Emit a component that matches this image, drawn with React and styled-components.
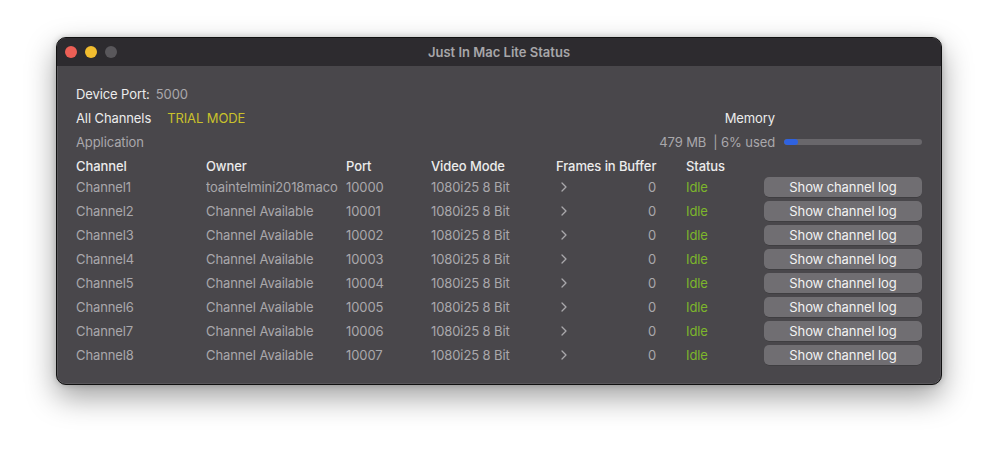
import React from 'react';
import styled, { createGlobalStyle } from 'styled-components';

const GlobalStyle = createGlobalStyle`
  body {
    margin: 0;
    background: #ffffff;
    font-family: Inter, "Noto Sans", "Liberation Sans", sans-serif;
    -webkit-font-smoothing: antialiased;
  }
`;

const Page = styled.div`
  width: 998px;
  height: 460px;
  padding: 37px 0 0 56px;
  box-sizing: border-box;
`;

const Window = styled.div`
  width: 886px;
  height: 348px;
  border-radius: 10px;
  background: #49474b;
  border: 1px solid #111;
  box-sizing: border-box;
  box-shadow: 0 0 0 0.5px rgba(255, 255, 255, 0.18) inset, 0 12px 30px rgba(0, 0, 0, 0.38), 0 0 6px rgba(0, 0, 0, 0.2);
  overflow: hidden;
  display: flex;
  flex-direction: column;
`;

const TitleBar = styled.div`
  height: 28px;
  flex: none;
  background: #2d2b2f;
  display: flex;
  align-items: center;
  position: relative;
  padding-left: 8px;
  gap: 8px;
`;

const Light = styled.span`
  width: 12px;
  height: 12px;
  border-radius: 50%;
  background: ${({ color }) => color};
`;

const Title = styled.div`
  position: absolute;
  left: 0;
  right: 0;
  text-align: center;
  font-size: 13px;
  font-weight: 600;
  color: #a7a6a9;
  pointer-events: none;
`;

const Content = styled.div`
  padding: 16px 19px 0 19px;
  font-size: 13px;
  letter-spacing: -0.1px;
`;

const InfoRow = styled.div`
  height: 24px;
  display: flex;
  align-items: center;
  justify-content: space-between;
`;

const Group = styled.div`
  display: flex;
  align-items: center;
  gap: ${({ gap }) => gap || 0}px;
`;

const Label = styled.span`
  color: #ececec;
`;

const Value = styled.span`
  color: #a9a8ab;
`;

const Trial = styled.span`
  color: #c9c12b;
`;

const MemLabel = styled.span`
  color: #ececec;
  margin-right: 147px;
`;

const Bar = styled.div`
  width: 138px;
  height: 6px;
  border-radius: 3px;
  background: #69676b;
  overflow: hidden;
  margin-left: 9px;
`;

const Fill = styled.div`
  height: 100%;
  background: #2f62df;
  border-radius: 3px;
`;

const Grid = styled.div`
  display: grid;
  grid-template-columns: 130px 140px 85px 125px 100px 30px 78px 158px;
  align-items: center;
`;

const HeadRow = styled(Grid)`
  height: 21px;
  padding-top: 3px;
  box-sizing: border-box;
  color: #ececec;
  font-weight: 500;
`;

const Row = styled(Grid)`
  height: 24px;
  color: #a9a8ab;
`;

const Cell = styled.div`
  white-space: nowrap;
  overflow: ${({ wide }) => (wide ? 'visible' : 'hidden')};
`;

const Frames = styled.div`
  display: flex;
  align-items: center;
  justify-content: space-between;
  padding-left: 5px;
`;

const Idle = styled.span`
  color: #7db62b;
`;

const LogButton = styled.button`
  height: 20px;
  width: 158px;
  border: none;
  border-radius: 5px;
  background: #706e72;
  color: #f2f2f2;
  font-family: inherit;
  font-size: 13px;
  letter-spacing: -0.1px;
  padding: 0;
  box-shadow: 0 0.5px 0 rgba(0, 0, 0, 0.25);
`;

const Chevron = () => (
  <svg width="6" height="10" viewBox="0 0 6 10">
    <path d="M1 1l4 4-4 4" fill="none" stroke="#a9a8ab" strokeWidth="1.3" strokeLinecap="round" strokeLinejoin="round" />
  </svg>
);

const channels = Array.from({ length: 8 }, (_, i) => ({
  name: `Channel${i + 1}`,
  owner: i === 0 ? 'toaintelmini2018maco' : 'Channel Available',
  port: 10000 + i,
}));

export default function App() {
  return (
    <Page>
      <GlobalStyle />
      <Window>
        <TitleBar>
          <Light color="#ec5f56" />
          <Light color="#f2bd2f" />
          <Light color="#59575b" />
          <Title>Just In Mac Lite Status</Title>
        </TitleBar>
        <Content>
          <InfoRow>
            <Group gap={6}>
              <Label>Device Port:</Label>
              <Value>5000</Value>
            </Group>
          </InfoRow>
          <InfoRow>
            <Group gap={16}>
              <Label>All Channels</Label>
              <Trial>TRIAL MODE</Trial>
            </Group>
            <MemLabel>Memory</MemLabel>
          </InfoRow>
          <InfoRow>
            <Value>Application</Value>
            <Group>
              <Value>479 MB &nbsp;| 6% used</Value>
              <Bar>
                <Fill style={{ width: '10%' }} />
              </Bar>
            </Group>
          </InfoRow>
          <HeadRow>
            <Cell>Channel</Cell>
            <Cell>Owner</Cell>
            <Cell>Port</Cell>
            <Cell>Video Mode</Cell>
            <Cell wide>Frames in Buffer</Cell>
            <Cell />
            <Cell>Status</Cell>
            <Cell />
          </HeadRow>
          {channels.map((c) => (
            <Row key={c.name}>
              <Cell>{c.name}</Cell>
              <Cell>{c.owner}</Cell>
              <Cell>{c.port}</Cell>
              <Cell>1080i25 8 Bit</Cell>
              <Frames>
                <Chevron />
                <span>0</span>
              </Frames>
              <Cell />
              <Cell><Idle>Idle</Idle></Cell>
              <LogButton>Show channel log</LogButton>
            </Row>
          ))}
        </Content>
      </Window>
    </Page>
  );
}
